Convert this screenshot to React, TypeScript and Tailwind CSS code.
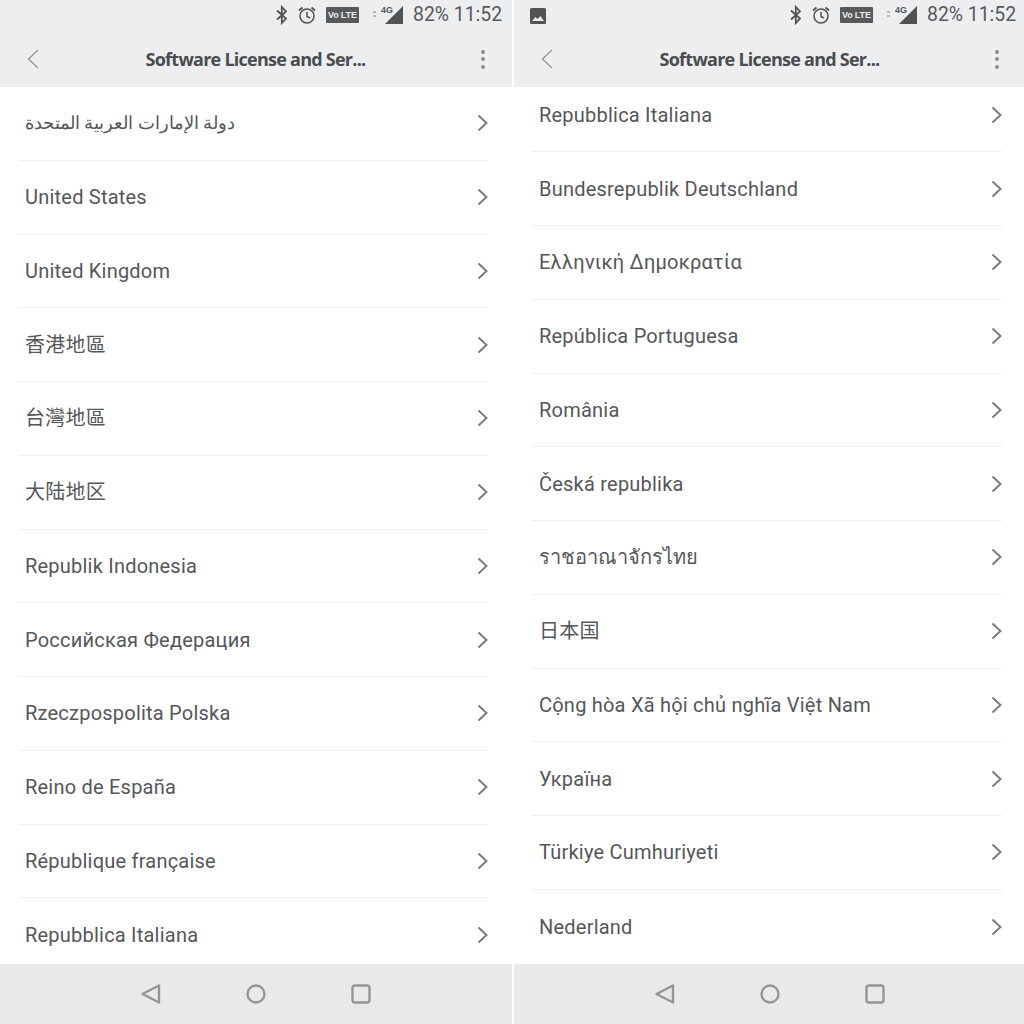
const cjk = "font-['Roboto','Noto_Sans','Noto_Sans_CJK_TC',sans-serif]";

const leftItems = ["دولة الإمارات العربية المتحدة","United States","United Kingdom","香港地區","台灣地區","大陆地区","Republik Indonesia","Российская Федерация","Rzeczpospolita Polska","Reino de España","République française","Repubblica Italiana"];
const rightItems = ["Repubblica Italiana","Bundesrepublik Deutschland","Ελληνική Δημοκρατία","República Portuguesa","România","Česká republika","ราชอาณาจักรไทย","日本国","Cộng hòa Xã hội chủ nghĩa Việt Nam","Україна","Türkiye Cumhuriyeti","Nederland"];

function Chevron() {
  return (
    <svg width="11" height="18" viewBox="0 0 11 18" fill="none" stroke="#77797b" strokeWidth="1.9" className="shrink-0">
      <path d="M1.5 1.5 L9.5 9 L1.5 16.5" />
    </svg>
  );
}

function textClass(t: string) {
  if (t.startsWith("دولة")) return "text-[17.5px] tracking-normal";
  if (t.startsWith("ราช")) return "text-[20px] tracking-normal";
  return "text-[20px] tracking-[0.22px]";
}

function StatusIcons() {
  return (
    <div className="flex items-center">
      <svg width="14" height="20" viewBox="0 0 14 20" fill="none" stroke="#505254" strokeWidth="1.8" className="mr-[8px]">
        <path d="M2 5.5 L11 13.5 L6.8 18 V2 L11 6.5 L2 14.5" />
      </svg>
      <svg width="20" height="20" viewBox="0 0 20 20" fill="none" stroke="#505254" strokeWidth="1.5" className="mr-[9px]">
        <circle cx="10" cy="11" r="7" />
        <path d="M10 7 V11.5 L13 13" />
        <path d="M2 5.5 L5.5 2.5 M18 5.5 L14.5 2.5" strokeWidth="1.8" />
      </svg>
      <div className="mr-[14px] flex h-[16px] w-[33px] items-center justify-center gap-[2px] rounded-[1px] bg-[#57595b] text-[9px] leading-none font-bold text-[#eceef0] font-['Liberation_Sans',sans-serif]">
        <span>Vo</span>
        <span>LTE</span>
      </div>
      <div className="relative mr-[10px] h-[20px] w-[30px]">
        <div className="absolute top-[6px] left-0 h-[2px] w-[3px] bg-[#b5b7b9]" />
        <div className="absolute top-[10px] left-0 h-[2px] w-[3px] bg-[#b5b7b9]" />
        <svg width="30" height="20" viewBox="0 0 30 20" className="absolute top-0 left-0">
          <path d="M30 1 V19 H12 Z" fill="#505254" />
        </svg>
        <div className="absolute top-[1px] left-[8px] bg-[#eceef0] text-[9px] leading-none font-bold text-[#505254] font-['Liberation_Sans',sans-serif]">4G</div>
      </div>
    </div>
  );
}

function Phone({ items, offset, picture }: { items: string[]; offset: string; picture?: boolean }) {
  return (
    <div className="flex h-full w-[512px] shrink-0 flex-col">
      <div className="h-[87px] shrink-0 bg-[#eceef0]">
        <div className="flex h-[30px] items-center justify-between pr-[10px] pl-[15px]">
          <div>
            {picture && (
              <svg width="18" height="18" viewBox="0 0 18 18" className="mt-[1px]">
                <rect x="1" y="1" width="16" height="16" rx="1.5" fill="#505254" />
                <path d="M3 14 L6.5 10 L8.5 12 L11.5 9 L15 14 Z" fill="#eceef0" />
              </svg>
            )}
          </div>
          <div className="flex items-center">
            <StatusIcons />
            <span className="w-[89px] text-[19.4px] leading-none whitespace-nowrap text-[#57595b]">82% 11:52</span>
          </div>
        </div>
        <div className="flex h-[57px] items-center justify-between pr-[27px] pl-[27px]">
          <svg width="12" height="20" viewBox="0 0 12 20" fill="none" stroke="#8f9193" strokeWidth="1.2">
            <path d="M11 1 L1.5 10 L11 19" />
          </svg>
          <div className="flex-1 pr-[9px] text-center text-[18px] leading-none font-bold text-[#4a4c4e] font-['Open_Sans',sans-serif] tracking-[-0.75px]">
            Software License and Ser...
          </div>
          <div className="mt-[1px] flex w-[4px] flex-col gap-[3.5px]">
            <span className="h-[4px] w-[4px] rounded-full bg-[#8a8c8e]" />
            <span className="h-[4px] w-[4px] rounded-full bg-[#8a8c8e]" />
            <span className="h-[4px] w-[4px] rounded-full bg-[#8a8c8e]" />
          </div>
        </div>
      </div>
      <div className="min-h-0 flex-1 overflow-hidden bg-white">
        <div className={offset}>
          {items.map((t) => (
            <div key={t} className="mr-[24px] ml-[18px] flex h-[73.75px] items-center justify-between border-b border-[#eceef0] pr-[0px] pl-[7px] last:border-b-0">
              <span dir="ltr" className={`leading-none text-[#55575a] ${textClass(t)} ${cjk}`}>{t}</span>
              <Chevron />
            </div>
          ))}
        </div>
      </div>
      <div className="flex h-[60px] shrink-0 items-center justify-center gap-[82px] bg-[#e9e9e9]">
        <svg width="20" height="20" viewBox="0 0 20 20" fill="none" stroke="#959595" strokeWidth="2.4" strokeLinejoin="round">
          <path d="M18 1.5 V18.5 L1.5 10 Z" />
        </svg>
        <svg width="20" height="20" viewBox="0 0 20 20" fill="none" stroke="#959595" strokeWidth="2.4" className="mx-[3px]">
          <circle cx="10" cy="10" r="8.5" />
        </svg>
        <svg width="20" height="20" viewBox="0 0 20 20" fill="none" stroke="#959595" strokeWidth="2.4">
          <rect x="1.5" y="1.5" width="17" height="17" rx="2.5" />
        </svg>
      </div>
    </div>
  );
}

export default function App() {
  return (
    <div className="flex h-[1024px] w-[1024px] gap-[2px] overflow-hidden bg-white font-['Roboto',sans-serif]">
      <Phone items={leftItems} offset="mt-0" />
      <Phone items={rightItems} offset="-mt-[8.5px]" picture />
    </div>
  );
}
